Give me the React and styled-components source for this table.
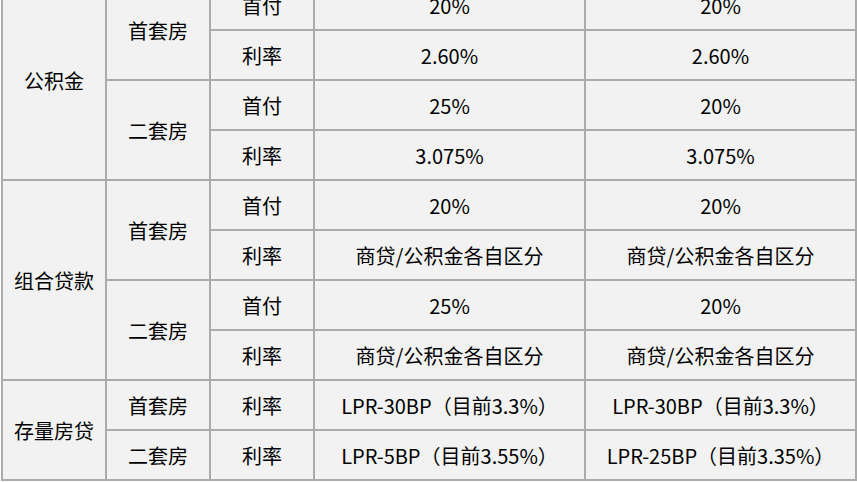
import React from 'react';
import styled, { createGlobalStyle } from 'styled-components';

const GlobalStyle = createGlobalStyle`
  html, body {
    margin: 0;
    padding: 0;
    background: #ffffff;
  }
  body {
    font-family: "Noto Sans CJK SC", "Noto Sans", sans-serif;
  }
`;

const columns = [104, 104, 104, 271, 271];

const rows = [
  { group: '公积金', groupSpan: 4, sub: '首套房', subSpan: 2, item: '首付', a: '20%', b: '20%' },
  { item: '利率', a: '2.60%', b: '2.60%' },
  { sub: '二套房', subSpan: 2, item: '首付', a: '25%', b: '20%' },
  { item: '利率', a: '3.075%', b: '3.075%' },
  { group: '组合贷款', groupSpan: 4, sub: '首套房', subSpan: 2, item: '首付', a: '20%', b: '20%' },
  { item: '利率', a: '商贷/公积金各自区分', b: '商贷/公积金各自区分' },
  { sub: '二套房', subSpan: 2, item: '首付', a: '25%', b: '20%' },
  { item: '利率', a: '商贷/公积金各自区分', b: '商贷/公积金各自区分' },
  { group: '存量房贷', groupSpan: 2, sub: '首套房', subSpan: 1, item: '利率', a: 'LPR-30BP（目前3.3%）', b: 'LPR-30BP（目前3.3%）' },
  { sub: '二套房', subSpan: 1, item: '利率', a: 'LPR-5BP（目前3.55%）', b: 'LPR-25BP（目前3.35%）' },
];

export default function App() {
  return (
    <>
      <GlobalStyle />
      <Viewport>
        <Table>
          <colgroup>
            {columns.map((w, i) => (
              <Col key={i} $w={w} />
            ))}
          </colgroup>
          <tbody>
            {rows.map((r, i) => (
              <Row key={i}>
                {r.group && <Cell rowSpan={r.groupSpan}>{r.group}</Cell>}
                {r.sub && <Cell rowSpan={r.subSpan}>{r.sub}</Cell>}
                <Cell>{r.item}</Cell>
                <Cell>{r.a}</Cell>
                <Cell>{r.b}</Cell>
              </Row>
            ))}
          </tbody>
        </Table>
      </Viewport>
    </>
  );
}

const Viewport = styled.div`
  width: 857px;
  height: 482px;
  overflow: hidden;
  background: #ffffff;
`;

const Table = styled.table`
  border-collapse: collapse;
  table-layout: fixed;
  width: 854px;
  margin-top: -21px;
  margin-left: 1px;
  background: #f2f2f2;
`;

const Col = styled.col`
  width: ${(p) => p.$w}px;
`;

const Row = styled.tr`
  height: 50px;
`;

const Cell = styled.td`
  border: 2px solid #ababab;
  padding: 0;
  text-align: center;
  vertical-align: middle;
  font-size: 20px;
  color: #000000;
  white-space: nowrap;
`;
